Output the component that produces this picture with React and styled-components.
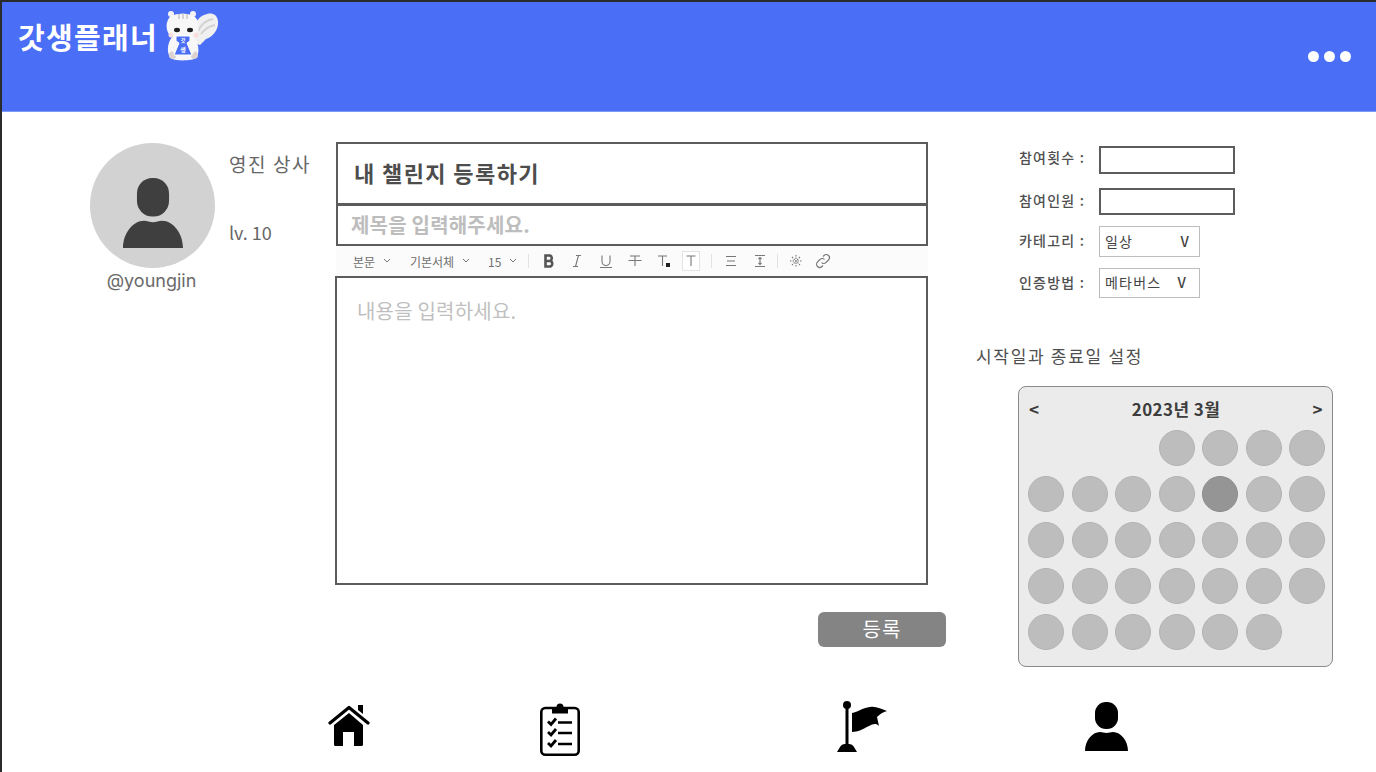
import React from 'react'
import styled, { createGlobalStyle } from 'styled-components'

const GlobalStyle = createGlobalStyle`
  * { box-sizing: border-box; }
  html, body { margin: 0; padding: 0; background: #fff; }
  body { font-family: "Noto Sans CJK KR", "Noto Sans", sans-serif; }
`

const Frame = styled.div`
  width: 1376px;
  height: 772px;
  overflow: hidden;
  border-top: 2px solid #2b2b2b;
  border-left: 2px solid #2b2b2b;
  display: flex;
  flex-direction: column;
  background: #fff;
`

const Header = styled.header`
  height: 110px;
  flex: none;
  background: #4a6ef5;
  border-bottom: 1px solid #7f99f7;
  padding: 5px 25px 0 16px;
  display: flex;
  justify-content: space-between;
`

const Brand = styled.div`
  display: flex;
  align-items: flex-start;
  gap: 8px;
`

const BrandName = styled.h1`
  margin: 9px 0 0;
  font-size: 29px;
  line-height: 40px;
  font-weight: 700;
  letter-spacing: 1.3px;
  color: #fff;
`

const Dots = styled.div`
  display: flex;
  gap: 5px;
  margin-top: 44px;
`

const Dot = styled.span`
  width: 11px;
  height: 11px;
  border-radius: 50%;
  background: #fff;
`

const Main = styled.main`
  flex: none;
  height: 556px;
  display: flex;
  padding: 30px 0 0 88px;
`

const Profile = styled.section`
  width: 245px;
  flex: none;
  padding-top: 1px;
  display: grid;
  grid-template-columns: 125px 1fr;
  grid-template-rows: 125px auto;
  column-gap: 14px;
  align-content: start;
`

const Avatar = styled.div`
  width: 125px;
  height: 125px;
  border-radius: 50%;
  background: #d2d2d2;
  display: flex;
  justify-content: center;
  padding-top: 35px;
`

const ProfileInfo = styled.div`
  display: flex;
  flex-direction: column;
  color: #666;
  font-size: 18px;
  line-height: 26px;
`

const Rank = styled.span`
  margin: 8px 0 42px;
  font-size: 19px;
  letter-spacing: 1.6px;
  white-space: nowrap;
`

const Handle = styled.div`
  text-align: center;
  color: #6a6a6a;
  font-family: "Inter", sans-serif;
  font-size: 18px;
  line-height: 26px;
  padding-right: 2px;
`

const Editor = styled.section`
  width: 611px;
  flex: none;
  display: flex;
  flex-direction: column;
`

const TitleBox = styled.div`
  width: 592px;
  height: 63px;
  margin-left: 1px;
  border: 2px solid #5c5c5c;
  padding: 0 0 4px 16px;
  display: flex;
  align-items: center;
  font-size: 22px;
  font-weight: 700;
  color: #4d4d4d;
  letter-spacing: 1.4px;
`

const SubjectBox = styled.div`
  width: 592px;
  height: 42px;
  margin: -1px 0 0 1px;
  border: 2px solid #5c5c5c;
  padding: 0 0 2px 13px;
  display: flex;
  align-items: center;
  font-size: 20px;
  font-weight: 700;
  letter-spacing: 0.2px;
  color: #bdbdbd;
`

const Toolbar = styled.div`
  width: 592px;
  height: 30px;
  margin-left: 1px;
  background: #fbfbfb;
  display: flex;
  align-items: center;
  padding-left: 17px;
  color: #6f6f6f;
  font-size: 12px;
`

const ToolDrop = styled.span`
  display: flex;
  align-items: center;
  gap: 8px;
  width: ${p => p.$w}px;
  white-space: nowrap;
`

const ToolBtn = styled.span`
  width: ${p => p.$w || 28}px;
  height: 20px;
  margin-left: ${p => p.$ml || 0}px;
  display: flex;
  align-items: center;
  justify-content: center;
  border: ${p => (p.$boxed ? '1px solid #e3e3e3' : 'none')};
  background: ${p => (p.$boxed ? '#fff' : 'transparent')};
`

const ToolSep = styled.span`
  width: 1px;
  height: 14px;
  background: #e2e2e2;
  margin: 0 ${p => p.$m || 0}px;
`

const ContentBox = styled.div`
  width: 593px;
  height: 309px;
  border: 2px solid #5c5c5c;
  padding: 18px 20px;
  font-size: 20px;
  line-height: 30px;
  letter-spacing: 0.2px;
  color: #bfbfbf;
`

const SubmitRow = styled.div`
  width: 611px;
  display: flex;
  justify-content: flex-end;
  margin-top: 27px;
`

const SubmitButton = styled.button`
  width: 128px;
  height: 35px;
  border: none;
  border-radius: 6px;
  background: #848484;
  color: #fff;
  font: inherit;
  font-size: 20px;
  line-height: 30px;
  letter-spacing: 1px;
  padding: 0 0 2px;
`

const Side = styled.aside`
  margin-left: 30px;
  width: 360px;
  display: flex;
  flex-direction: column;
`

const Fields = styled.div`
  display: flex;
  flex-direction: column;
  margin: 4px 0 0 43px;
`

const Field = styled.div`
  display: flex;
  align-items: center;
  height: ${p => p.$h}px;
  margin-bottom: ${p => p.$mb}px;
  font-size: 14px;
  color: #4f4f4f;
`

const FieldLabel = styled.span`
  width: 80px;
  padding-bottom: ${p => p.$pb || 3}px;
  font-weight: 500;
  letter-spacing: 1.2px;
  white-space: nowrap;
`

const FieldInput = styled.div`
  width: 136px;
  height: 100%;
  border: 2px solid #5c5c5c;
  background: #fff;
`

const FieldSelect = styled.div`
  width: 101px;
  height: 100%;
  border: 1px solid #bdbdbd;
  display: flex;
  align-items: center;
  justify-content: space-between;
  padding: 0 ${p => p.$pr}px 2px 5px;
  color: #444;
  font-size: 14px;
  letter-spacing: 1.2px;
  white-space: nowrap;
`

const SelectArrow = styled.span`
  font-weight: 500;
`

const DateHeading = styled.h2`
  margin: 46px 0 0;
  font-size: 17px;
  line-height: 24px;
  font-weight: 400;
  color: #4f4f4f;
  letter-spacing: 1.7px;
`

const Calendar = styled.div`
  margin: 18px 0 0 42px;
  width: 315px;
  height: 281px;
  background: #ebebeb;
  border: 1px solid #8a8a8a;
  border-radius: 8px;
  padding: 9px 7px 0 9px;
`

const CalendarHead = styled.div`
  display: flex;
  align-items: center;
  justify-content: space-between;
  height: 24px;
  padding: 0 2px 0 1px;
  font-size: 17px;
  font-weight: 700;
  letter-spacing: 0.4px;
  color: #3d3d3d;
`

const CalendarGrid = styled.div`
  display: grid;
  grid-template-columns: repeat(7, 36px);
  grid-auto-rows: 36px;
  justify-content: space-between;
  row-gap: 10px;
  margin-top: 10px;
`

const Day = styled.span`
  width: 36px;
  height: 36px;
  border-radius: 50%;
  background: ${p => (p.$active ? '#959595' : '#bdbdbd')};
  border: 1px solid ${p => (p.$active ? '#8c8c8c' : '#b3b3b3')};
`

const BottomNav = styled.nav`
  flex: 1;
  display: flex;
  align-items: flex-start;
  padding: 33px 0 0 326px;
`

const NavSlot = styled.span`
  width: ${p => p.$w}px;
  padding-top: ${p => p.$top || 0}px;
  flex: none;
  display: flex;
`

const Squirrel = () => (
  <svg width="54" height="56" viewBox="0 0 54 56">
    <path d="M28 36c-4-12 1-24 10-28 6-3 13-2 14 6 1 8-5 16-12 18l-6 6z" fill="#f0f0f0" />
    <path d="M32 24c3-6 8-11 15-12M35 27c3-4 8-8 14-9" stroke="#d2d2d2" strokeWidth="2" fill="none" />
    <circle cx="5" cy="7" r="3" fill="#f3f3f3" />
    <circle cx="27" cy="7" r="3" fill="#f3f3f3" />
    <path d="M6 30C0 26-1 17 3 11c4-5 22-6 27 0 4 6 4 15-2 19 5 6 6 16 2 21-3 3-20 3-24 1-6-4-5-16 0-22z" fill="#f7f7f7" />
    <path d="M6 44c-3 1-4 5-2 7 3 2 6 1 6-2zM29 44c3 1 4 5 2 7-3 2-6 1-6-2z" fill="#dcd2d2" />
    <path d="M13 7v5M17 6v6M21 7v5" stroke="#c2c2c2" strokeWidth="1.300" />
    <ellipse cx="11" cy="23" rx="3" ry="2.200" fill="#1f1f1f" />
    <ellipse cx="24" cy="23" rx="3" ry="2.200" fill="#1f1f1f" />
    <circle cx="5" cy="28" r="2.500" fill="#f8dede" />
    <circle cx="30" cy="28" r="2.500" fill="#f8dede" />
    <path d="M10 29h14v5l-3 2 5 12H8l5-12-3-2z" fill="#4a6ef5" stroke="#fff" strokeWidth="1" />
    <text x="17" y="35" fontSize="5" fill="#fff" textAnchor="middle" fontWeight="700">갓</text>
    <text x="17" y="45" fontSize="6" fill="#fff" textAnchor="middle" fontWeight="700">생</text>
  </svg>
)

const PersonIcon = ({ w, h, color }) => (
  <svg width={w} height={h} viewBox="0 0 43 49" fill={color} preserveAspectRatio="none">
    <rect x="10" y="0" width="23" height="27" rx="11" />
    <path d="M0 49c0-10 7-19 15-19 2.500 0 4 1 6.500 1s4-1 6.500-1c8 0 15 9 15 19z" />
  </svg>
)

const HomeIcon = () => (
  <svg width="42" height="42" viewBox="0 0 42 42" fill="#000">
    <path d="M30 0h5v9l-5-4z" />
    <path d="M2 18 21 2.500 40 18" fill="none" stroke="#000" strokeWidth="3.200" strokeLinecap="round" strokeLinejoin="round" />
    <path d="M6 20 21 8l14 12v19.500a1.500 1.500 0 0 1-1.500 1.500H26V27H15v14H7.500A1.500 1.500 0 0 1 6 39.500z" />
  </svg>
)

const ChecklistIcon = () => (
  <svg width="40" height="53" viewBox="0 0 40 53" fill="none" stroke="#000">
    <rect x="1.300" y="5" width="37.400" height="46.700" rx="4" strokeWidth="2.600" />
    <path d="M12 4h4.500a3.500 3.500 0 0 1 7 0H28v6.500H12z" fill="#000" stroke="none" />
    <path d="M8 18.500l3 3 5-6M8 29l3 3 5-6M8 40l3 3 5-6" strokeWidth="2.800" />
    <path d="M18 19.500h14M18 30h14M18 41h14" strokeWidth="2.600" />
  </svg>
)

const FlagIcon = () => (
  <svg width="50" height="51" viewBox="0 0 50 51" fill="#000">
    <circle cx="10" cy="4" r="4" />
    <rect x="8.500" y="6" width="3" height="37" />
    <path d="M0 51l3-5c1-2 3-3 5-3h4c2 0 4 1 5 3l3 5z" />
    <path d="M15 12c6-1 10-5 18-6 6-1 11 2 17 4-4 1-7 3-10 6l2 9c-3-3-6-2-10 0-6 3-11 6-17 6z" />
  </svg>
)

const Chevron = () => (
  <svg width="8" height="6" viewBox="0 0 8 6" fill="none" stroke="#777" strokeWidth="1">
    <path d="M1 1l3 3 3-3" />
  </svg>
)

const glyph = { width: 16, height: 16, viewBox: '0 0 16 16', fill: 'none', stroke: '#777', strokeWidth: 1.100 }

const days = [
  null, null, null, 1, 2, 3, 4,
  5, 6, 7, 8, 9, 10, 11,
  12, 13, 14, 15, 16, 17, 18,
  19, 20, 21, 22, 23, 24, 25,
  26, 27, 28, 29, 30, 31, null,
]

const App = () => (
  <Frame>
    <GlobalStyle />
    <Header>
      <Brand>
        <BrandName>갓생플래너</BrandName>
        <Squirrel />
      </Brand>
      <Dots>
        <Dot />
        <Dot />
        <Dot />
      </Dots>
    </Header>
    <Main>
      <Profile>
        <Avatar>
          <PersonIcon w={60} h={70} color="#3f3f3f" />
        </Avatar>
        <ProfileInfo>
          <Rank>영진 상사</Rank>
          <span>lv. 10</span>
        </ProfileInfo>
        <Handle>@youngjin</Handle>
      </Profile>
      <Editor>
        <TitleBox>내 챌린지 등록하기</TitleBox>
        <SubjectBox>제목을 입력해주세요.</SubjectBox>
        <Toolbar>
          <ToolDrop $w={57}>본문 <Chevron /></ToolDrop>
          <ToolDrop $w={78}>기본서체 <Chevron /></ToolDrop>
          <ToolDrop $w={40}>15 <Chevron /></ToolDrop>
          <ToolSep />
          <ToolBtn $w={34} $ml={3}>
            <svg {...glyph} stroke="#555" strokeWidth="2.600"><path d="M4.500 2.500h4.500a3 3 0 0 1 0 5.500H4.500zM4.500 8h5a3 3 0 0 1 0 5.500h-5z" /></svg>
          </ToolBtn>
          <ToolBtn $w={22}>
            <svg {...glyph}><path d="M7 2.500h5M4 13.500h5M9.500 2.500l-3 11" /></svg>
          </ToolBtn>
          <ToolBtn $w={36}>
            <svg {...glyph}><path d="M4 2.500v6a4 4 0 0 0 8 0v-6M2 14.500h12" /></svg>
          </ToolBtn>
          <ToolBtn $w={22}>
            <svg {...glyph}><path d="M3 3h10M8 3v10M1.500 7.500h13" /></svg>
          </ToolBtn>
          <ToolBtn $w={36}>
            <svg {...glyph}><path d="M2 3h9M6.500 3v10" /><rect x="10" y="10" width="4" height="4" fill="#222" stroke="none" /></svg>
          </ToolBtn>
          <ToolBtn $w={18} $boxed>
            <svg {...glyph}><path d="M3.500 3h9M8 3v10" /></svg>
          </ToolBtn>
          <ToolSep $m={11} />
          <ToolBtn $w={16}>
            <svg {...glyph}><path d="M3 3.500h10M4 8h8M3 12.500h10" /></svg>
          </ToolBtn>
          <ToolBtn $w={16} $ml={13}>
            <svg {...glyph}><path d="M3 2.500h10M3 13.500h10M8 4.500v7M6.500 6L8 4.500 9.500 6M6.500 10L8 11.500 9.500 10" /></svg>
          </ToolBtn>
          <ToolSep $m={9} />
          <ToolBtn $w={18}>
            <svg {...glyph} strokeDasharray="1.500 1"><path d="M8 2v12M2 8h12M4 4l8 8M12 4l-8 8" /></svg>
          </ToolBtn>
          <ToolBtn $w={18} $ml={9}>
            <svg {...glyph}><path d="M6.500 9.500a3 3 0 0 0 4.500 0l2.500-2.500a3 3 0 0 0-4.500-4.500L8 3.500M9.500 6.500a3 3 0 0 0-4.500 0L2.500 9a3 3 0 0 0 4.500 4.500l1-1" /></svg>
          </ToolBtn>
        </Toolbar>
        <ContentBox>내용을 입력하세요.</ContentBox>
        <SubmitRow>
          <SubmitButton>등록</SubmitButton>
        </SubmitRow>
      </Editor>
      <Side>
        <Fields>
          <Field $h={28} $mb={14}>
            <FieldLabel $pb={6}>참여횟수 :</FieldLabel>
            <FieldInput />
          </Field>
          <Field $h={27} $mb={11}>
            <FieldLabel>참여인원 :</FieldLabel>
            <FieldInput />
          </Field>
          <Field $h={31} $mb={11}>
            <FieldLabel>카테고리 :</FieldLabel>
            <FieldSelect $pr={9}><span>일상</span><SelectArrow>V</SelectArrow></FieldSelect>
          </Field>
          <Field $h={30} $mb={0}>
            <FieldLabel>인증방법 :</FieldLabel>
            <FieldSelect $pr={12}><span>메타버스</span><SelectArrow>V</SelectArrow></FieldSelect>
          </Field>
        </Fields>
        <DateHeading>시작일과 종료일 설정</DateHeading>
        <Calendar>
          <CalendarHead>
            <span>&lt;</span>
            <span>2023년 3월</span>
            <span>&gt;</span>
          </CalendarHead>
          <CalendarGrid>
            {days.map((d, i) => (d ? <Day key={i} $active={d === 9} /> : <span key={i} />))}
          </CalendarGrid>
        </Calendar>
      </Side>
    </Main>
    <BottomNav>
      <NavSlot $w={212} $top={4}><HomeIcon /></NavSlot>
      <NavSlot $w={297} $top={2}><ChecklistIcon /></NavSlot>
      <NavSlot $w={248}><FlagIcon /></NavSlot>
      <NavSlot $w={50} $top={1}><PersonIcon w={43} h={49} color="#000" /></NavSlot>
    </BottomNav>
  </Frame>
)

export default App
